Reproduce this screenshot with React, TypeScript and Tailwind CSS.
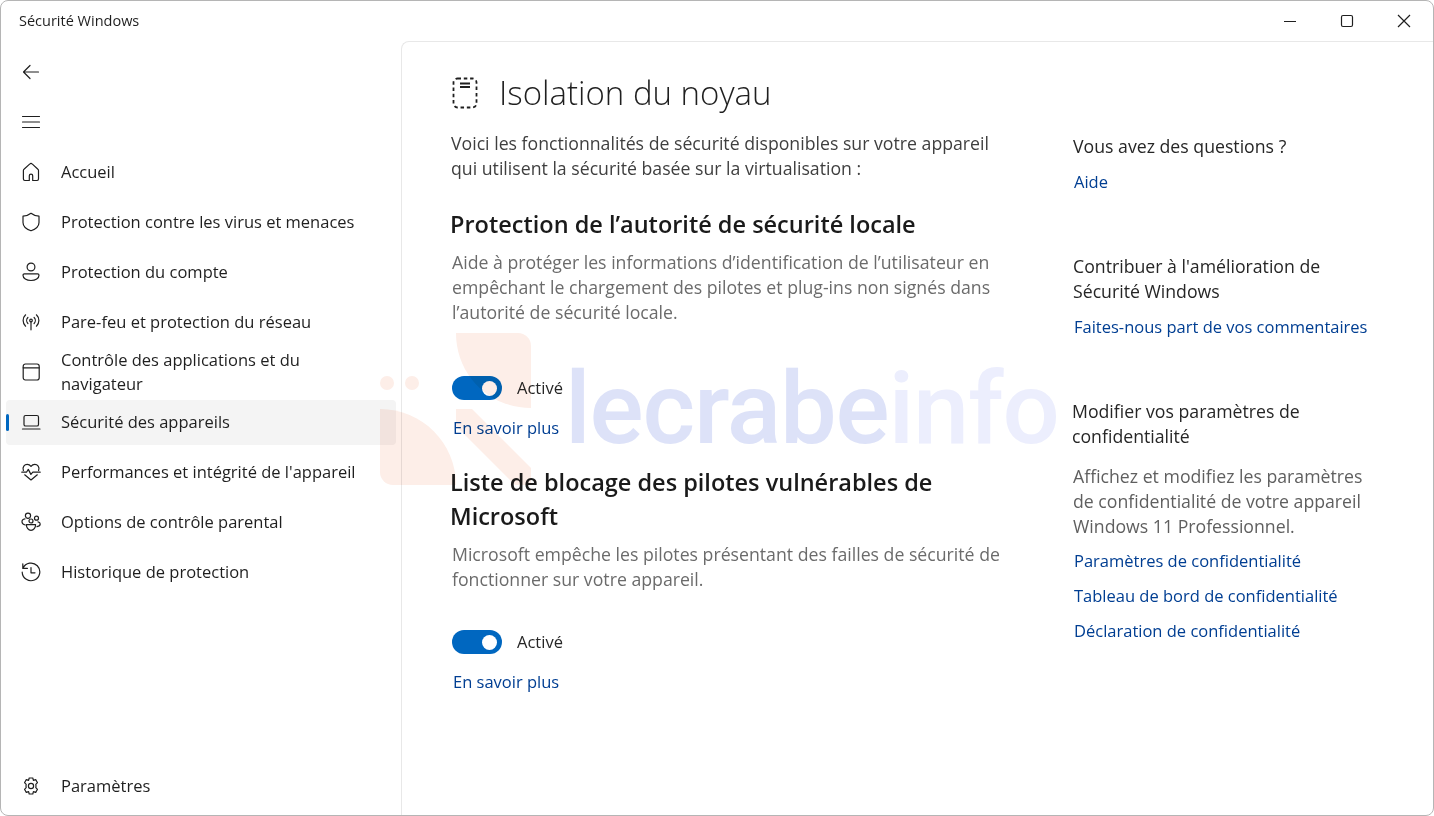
import type { ReactNode } from 'react'

const font = { fontFamily: '"Open Sans", "Noto Sans", sans-serif' }

function Icon({ children, className = 'w-5 h-5' }: { children: ReactNode; className?: string }) {
  return (
    <svg viewBox="0 0 20 20" fill="none" stroke="#1f1f1f" strokeWidth="1.200" strokeLinecap="round" strokeLinejoin="round" className={className}>
      {children}
    </svg>
  )
}

const navItems: { label: ReactNode; icon: ReactNode; active?: boolean }[] = [
  {
    label: 'Accueil',
    icon: <path d="M8.300 18.500v-4.700a1.700 1.700 0 0 1 3.400 0v4.700h4.400a1.400 1.400 0 0 0 1.400-1.400V8.400a1.600 1.600 0 0 0-.6-1.200l-5.500-5.100a2 2 0 0 0-2.800 0L3 7.200a1.600 1.600 0 0 0-.6 1.200v8.700a1.400 1.400 0 0 0 1.400 1.400z" />,
  },
  {
    label: 'Protection contre les virus et menaces',
    icon: <path d="M10 1.300c2.400 1.900 5 2.800 8 2.900v6.300c0 3.700-2.700 6.500-8 8.300-5.300-1.800-8-4.600-8-8.300V4.200c3-.1 5.600-1 8-2.900z" />,
  },
  {
    label: 'Protection du compte',
    icon: (
      <>
        <circle cx="10" cy="5" r="3.900" />
        <path d="M3.400 11.800h13.200a1.400 1.400 0 0 1 1.400 1.400c0 3.100-3.400 5.300-8 5.300s-8-2.200-8-5.300a1.400 1.400 0 0 1 1.400-1.400z" />
      </>
    ),
  },
  {
    label: 'Pare-feu et protection du réseau',
    icon: (
      <>
        <circle cx="10" cy="8.500" r="1.300" />
        <path d="M10 9.800v8M6.900 5.500a4.300 4.300 0 0 0 0 6M13.100 5.500a4.300 4.300 0 0 1 0 6M4.600 2.800a7.800 7.800 0 0 0 0 11.400M15.400 2.800a7.800 7.800 0 0 1 0 11.400" />
      </>
    ),
  },
  {
    label: (
      <>
        Contrôle des applications et du
        <br />
        navigateur
      </>
    ),
    icon: (
      <>
        <rect x="2.200" y="2" width="16" height="16" rx="2.200" />
        <path d="M2.200 5.800h16" />
      </>
    ),
  },
  {
    label: 'Sécurité des appareils',
    active: true,
    icon: (
      <>
        <rect x="3" y="3.500" width="14.500" height="10.500" rx="1.600" />
        <path d="M1.500 17h17.500" />
      </>
    ),
  },
  {
    label: "Performances et intégrité de l'appareil",
    icon: (
      <path d="M2.400 8.500C1 5 3.600 2.400 6.200 2.400c1.700 0 2.900.8 3.800 2 .9-1.200 2.100-2 3.800-2 2.600 0 5.200 2.600 3.800 6.100M.8 10.200h4.700l1.800-2.800 2.600 5 1.900-2.200h7.400M3.700 12.800 10 18l6.300-5.200" />
    ),
  },
  {
    label: 'Options de contrôle parental',
    icon: (
      <>
        <circle cx="7" cy="3.700" r="2.600" />
        <circle cx="15.500" cy="6.200" r="2" />
        <circle cx="10" cy="9" r="2" />
        <path d="M4 6.800C2 7 .9 8.500 1 10c.1 1.400 1.400 2.700 3.200 3M17 9.800c1.300.2 2.200 1.100 2.200 2.300 0 1.300-1.300 2.400-3.200 2.600M5.400 12.700h9.200c0 3-2 5.600-4.600 5.600s-4.600-2.600-4.600-5.600z" />
      </>
    ),
  },
  {
    label: 'Historique de protection',
    icon: (
      <>
        <path d="M1.800 1.800v4.600h4.600M2 6.200a8.800 8.800 0 1 1-.8 4" />
        <path d="M10 5.500v5.300h4" />
      </>
    ),
  },
]

function NavItem({ label, icon, active }: { label: ReactNode; icon: ReactNode; active?: boolean }) {
  return (
    <div className={`relative mx-[5px] my-[2.500px] flex h-[45px] w-[390px] items-center rounded ${active ? 'bg-[#f4f4f4]' : ''}`}>
      {active && <span className="absolute left-0 top-[14px] h-[17px] w-[3px] rounded-full bg-[#0067c0]" />}
      <span className="ml-[15px] w-[40px] shrink-0">{icon}</span>
      <span className="text-[16.500px] leading-[24px] text-[#1f1f1f]">{label}</span>
    </div>
  )
}

function Toggle() {
  return (
    <div className="flex items-center gap-[15px]">
      <div className="flex h-[24px] w-[50px] items-center justify-end rounded-full bg-[#0067c0] pr-[5px]">
        <span className="h-[15px] w-[15px] rounded-full bg-white" />
      </div>
      <span className="text-[16.500px] text-[#262626]">Activé</span>
    </div>
  )
}

function Link({ children, className = '' }: { children: ReactNode; className?: string }) {
  return <a className={`block h-[25px] text-[16.500px] leading-[25px] text-[#003e92] ${className}`}>{children}</a>
}

function Watermark() {
  return (
    <div className="pointer-events-none absolute left-[378px] top-[332px] h-[154px] w-[680px] mix-blend-multiply">
      <svg viewBox="0 0 154 154" className="absolute left-0 top-0 h-[154px] w-[154px]" fill="#fdeee8">
        <circle cx="8" cy="50" r="7" />
        <circle cx="33" cy="50" r="7" />
        <path d="M77 0h62a13 13 0 0 1 13 13v62C110 75 77 42 77 0z" />
        <path d="M1 76c42 0 76 34 76 76H14a13 13 0 0 1-13-13z" />
        <path d="M77 76h16l59 59v17h-16L77 93z" />
      </svg>
      <span className="absolute left-[186px] top-[11px] text-[101px] font-medium leading-[130px] tracking-[-1.200px]" style={{ fontFamily: 'Roboto, sans-serif' }}>
        <span className="text-[#dde2f8]">lecrabe</span>
        <span className="text-[#eceefd]">info</span>
      </span>
    </div>
  )
}

export default function App() {
  return (
    <div style={font} className="relative flex h-[816px] w-[1434px] flex-col overflow-hidden rounded-lg border border-[#b5b5b5] bg-white">
      {/* Title bar */}
      <div className="flex h-[40px] shrink-0 items-center justify-between">
        <span className="pl-[18px] text-[14.500px] text-[#1f1f1f]">Sécurité Windows</span>
        <div className="flex items-center gap-[37px] pr-[19px]">
          <svg viewBox="0 0 20 20" className="h-5 w-5" stroke="#1f1f1f" strokeWidth="1.200" fill="none"><path d="M4 10.500h12" /></svg>
          <svg viewBox="0 0 20 20" className="h-5 w-5" stroke="#1f1f1f" strokeWidth="1.200" fill="none"><rect x="4.500" y="4.500" width="11" height="11" rx="1.500" /></svg>
          <svg viewBox="0 0 20 20" className="h-5 w-5" stroke="#1f1f1f" strokeWidth="1.200" fill="none"><path d="M4 4l12 12M16 4 4 16" /></svg>
        </div>
      </div>

      <div className="flex min-h-0 flex-1">
        {/* Sidebar */}
        <nav className="flex w-[400px] shrink-0 flex-col pb-[4px]">
          <div className="mt-[6px] flex h-[50px] items-center pl-[20px]">
            <Icon>
              <path d="M17.500 10H2.500M9 3.500 2.500 10 9 16.500" />
            </Icon>
          </div>
          <div className="flex h-[50px] items-center pl-[20px]">
            <Icon>
              <path d="M1.500 4.500h17M1.500 10h17M1.500 15.500h17" />
            </Icon>
          </div>
          <div className="flex flex-col">
            {navItems.map((item, i) => (
              <NavItem key={i} label={item.label} icon={<Icon>{item.icon}</Icon>} active={item.active} />
            ))}
          </div>
          <div className="mt-auto">
            <NavItem
              label="Paramètres"
              icon={
                <Icon>
                  <circle cx="10" cy="10" r="2.600" />
                  <path d="M8.200 2h3.600l.6 2.400 2.300-.8 1.800 3.100-1.700 1.700a6 6 0 0 1 0 3.200l1.700 1.700-1.800 3.100-2.300-.8-.6 2.400H8.200l-.6-2.400-2.300.8-1.800-3.100 1.700-1.700a6 6 0 0 1 0-3.200L3.500 6.700l1.800-3.100 2.300.8z" />
                </Icon>
              }
            />
          </div>
        </nav>

        {/* Content */}
        <main className="flex min-w-0 flex-1 rounded-tl-lg border-l border-t border-[#e8e8e8] pl-[48px]">
          <div className="w-[622px] shrink-0">
            <div className="mt-[19px] flex h-[64px] items-center">
              <svg viewBox="0 0 26 32" className="ml-[2px] h-[32px] w-[26px]" fill="none" stroke="#1f1f1f" strokeWidth="1.800" strokeLinecap="butt">
                <rect x="1.500" y="1.500" width="23" height="29" rx="4" strokeDasharray="3.500 2.800" />
                <path d="M8 6.500h10M8 10h10" />
              </svg>
              <h1 className="ml-[21px] text-[33px] font-light text-[#1f1f1f]">Isolation du noyau</h1>
            </div>
            <p className="mt-[6px] pl-[1px] text-[17.700px] leading-[25px] text-[#3f3f3f]">
              Voici les fonctionnalités de sécurité disponibles sur votre appareil
              <br />
              qui utilisent la sécurité basée sur la virtualisation :
            </p>
            <h2 className="mt-[26px] text-[23.500px] font-semibold leading-[34px] text-[#1a1a1a]">Protection de l’autorité de sécurité locale</h2>
            <p className="mt-[9px] pl-[2px] text-[17.700px] leading-[25px] text-[#6b6b6b]">
              Aide à protéger les informations d’identification de l’utilisateur en
              <br />
              empêchant le chargement des pilotes et plug-ins non signés dans
              <br />
              l’autorité de sécurité locale.
            </p>
            <div className="mt-[51px] pl-[2px]"><Toggle /></div>
            <Link className="mt-[14px] pl-[3px]">En savoir plus</Link>
            <h2 className="mt-[25px] text-[23.500px] font-semibold leading-[34px] text-[#1a1a1a]">
              Liste de blocage des pilotes vulnérables de
              <br />
              Microsoft
            </h2>
            <p className="mt-[9px] pl-[2px] text-[17.700px] leading-[25px] text-[#6b6b6b]">
              Microsoft empêche les pilotes présentant des failles de sécurité de
              <br />
              fonctionner sur votre appareil.
            </p>
            <div className="mt-[38px] pl-[2px]"><Toggle /></div>
            <Link className="mt-[14px] pl-[3px]">En savoir plus</Link>
          </div>

          <aside className="ml-[1px] pt-[92px] text-[17.700px] leading-[25px] text-[#262626]">
            <p>Vous avez des questions ?</p>
            <Link className="mt-[10px] pl-[1px]">Aide</Link>
            <p className="mt-[60px]">
              Contribuer à l'amélioration de
              <br />
              Sécurité Windows
            </p>
            <Link className="mt-[10px] pl-[1px]">Faites-nous part de vos commentaires</Link>
            <p className="ml-[-1px] mt-[60px]">
              Modifier vos paramètres de
              <br />
              confidentialité
            </p>
            <p className="mt-[15px] text-[#5f5f5f]">
              Affichez et modifiez les paramètres
              <br />
              de confidentialité de votre appareil
              <br />
              Windows 11 Professionnel.
            </p>
            <Link className="mt-[9px] pl-[1px]">Paramètres de confidentialité</Link>
            <Link className="mt-[10px] pl-[1px]">Tableau de bord de confidentialité</Link>
            <Link className="mt-[10px] pl-[1px]">Déclaration de confidentialité</Link>
          </aside>
        </main>
      </div>
      <Watermark />
    </div>
  )
}
